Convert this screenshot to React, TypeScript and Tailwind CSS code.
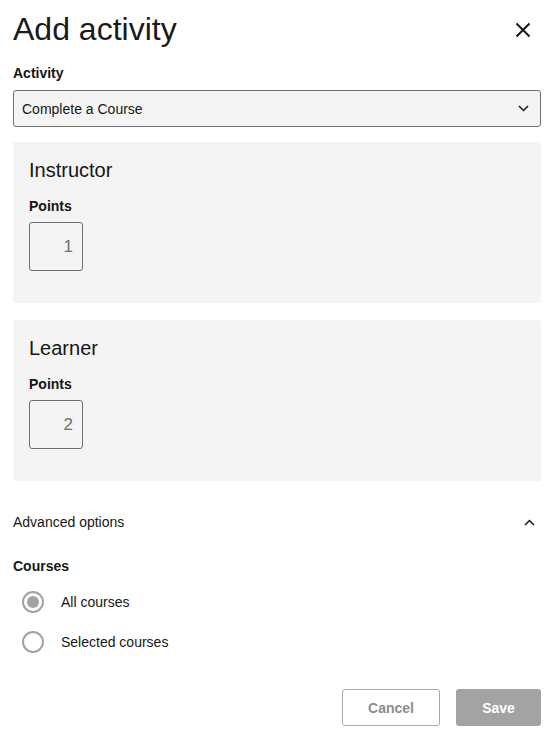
import React, { useState } from 'react';

interface PointsCardProps {
  title: string;
  points: number;
  className?: string;
}

function PointsCard({ title, points, className = '' }: PointsCardProps) {
  return (
    <div className={`rounded-[2px] bg-[#f4f4f4] px-4 pt-4 pb-8 ${className}`}>
      <div className="text-[20px] leading-6 text-[#161616]">{title}</div>
      <div className="mt-[14px] text-sm font-bold leading-5 text-[#161616]">Points</div>
      <div className="mt-[6px] flex h-[49px] w-[54px] items-center justify-end rounded-[3px] border border-[#6f6f6f] pr-[9px] text-[17px] text-[#6f6f6f]">
        {points}
      </div>
    </div>
  );
}

function Radio({ label, checked, onClick }: { label: string; checked: boolean; onClick: () => void }) {
  return (
    <button onClick={onClick} className="flex h-10 items-center text-left">
      <span className="ml-[9px] flex h-[22px] w-[22px] items-center justify-center rounded-full border-2 border-[#a3a3a3]">
        {checked && <span className="h-3 w-3 rounded-full bg-[#a3a3a3]" />}
      </span>
      <span className="ml-[17px] text-sm text-[#161616]">{label}</span>
    </button>
  );
}

export default function App() {
  const [scope, setScope] = useState<'all' | 'selected'>('all');

  return (
    <div className="min-h-[736px] w-[553px] bg-white pl-[13px] pr-[12px] font-['Liberation_Sans',Arial,sans-serif] text-[#161616]">
      {/* header */}
      <div className="flex items-center justify-between pt-[9px]">
        <h1 className="text-[32px] leading-10 text-[#1a1a1a]">Add activity</h1>
        <button className="mr-[10px] mt-[2px] text-[#161616]" aria-label="Close">
          <svg width="16" height="16" viewBox="0 0 16 16" fill="none" stroke="currentColor" strokeWidth="2">
            <path d="M1.5 1.5l13 13M14.5 1.5l-13 13" />
          </svg>
        </button>
      </div>

      {/* activity select */}
      <div className="mt-[14px] text-sm font-bold leading-5">Activity</div>
      <div className="mt-[7px] flex h-[37px] items-center justify-between rounded-[3px] border border-[#6f6f6f] bg-[#f4f4f4] pl-2 pr-[11px]">
        <span className="text-sm">Complete a Course</span>
        <svg width="11" height="7" viewBox="0 0 11 7" fill="none" stroke="#161616" strokeWidth="1.5">
          <path d="M1 1l4.5 4.5L10 1" />
        </svg>
      </div>

      <PointsCard className="mt-[15px]" title="Instructor" points={1} />
      <PointsCard className="mt-[17px]" title="Learner" points={2} />

      {/* advanced */}
      <div className="mt-[31px] flex items-center justify-between">
        <span className="text-sm leading-5">Advanced options</span>
        <svg className="mr-[6px]" width="11" height="7" viewBox="0 0 11 7" fill="none" stroke="#161616" strokeWidth="1.5">
          <path d="M1 6l4.5-4.5L10 6" />
        </svg>
      </div>

      <div className="mt-6 text-sm font-bold leading-5">Courses</div>
      <div className="mt-1.5 flex flex-col">
        <Radio label="All courses" checked={scope === 'all'} onClick={() => setScope('all')} />
        <Radio label="Selected courses" checked={scope === 'selected'} onClick={() => setScope('selected')} />
      </div>

      {/* footer */}
      <div className="mt-[27px] flex justify-end gap-4">
        <button className="h-[37px] w-[98px] rounded-[3px] border border-[#a8a8a8] bg-white text-sm font-bold text-[#8d8d8d]">
          Cancel
        </button>
        <button className="h-[37px] w-[85px] rounded-[3px] bg-[#a3a3a3] text-sm font-bold text-white">
          Save
        </button>
      </div>
    </div>
  );
}
